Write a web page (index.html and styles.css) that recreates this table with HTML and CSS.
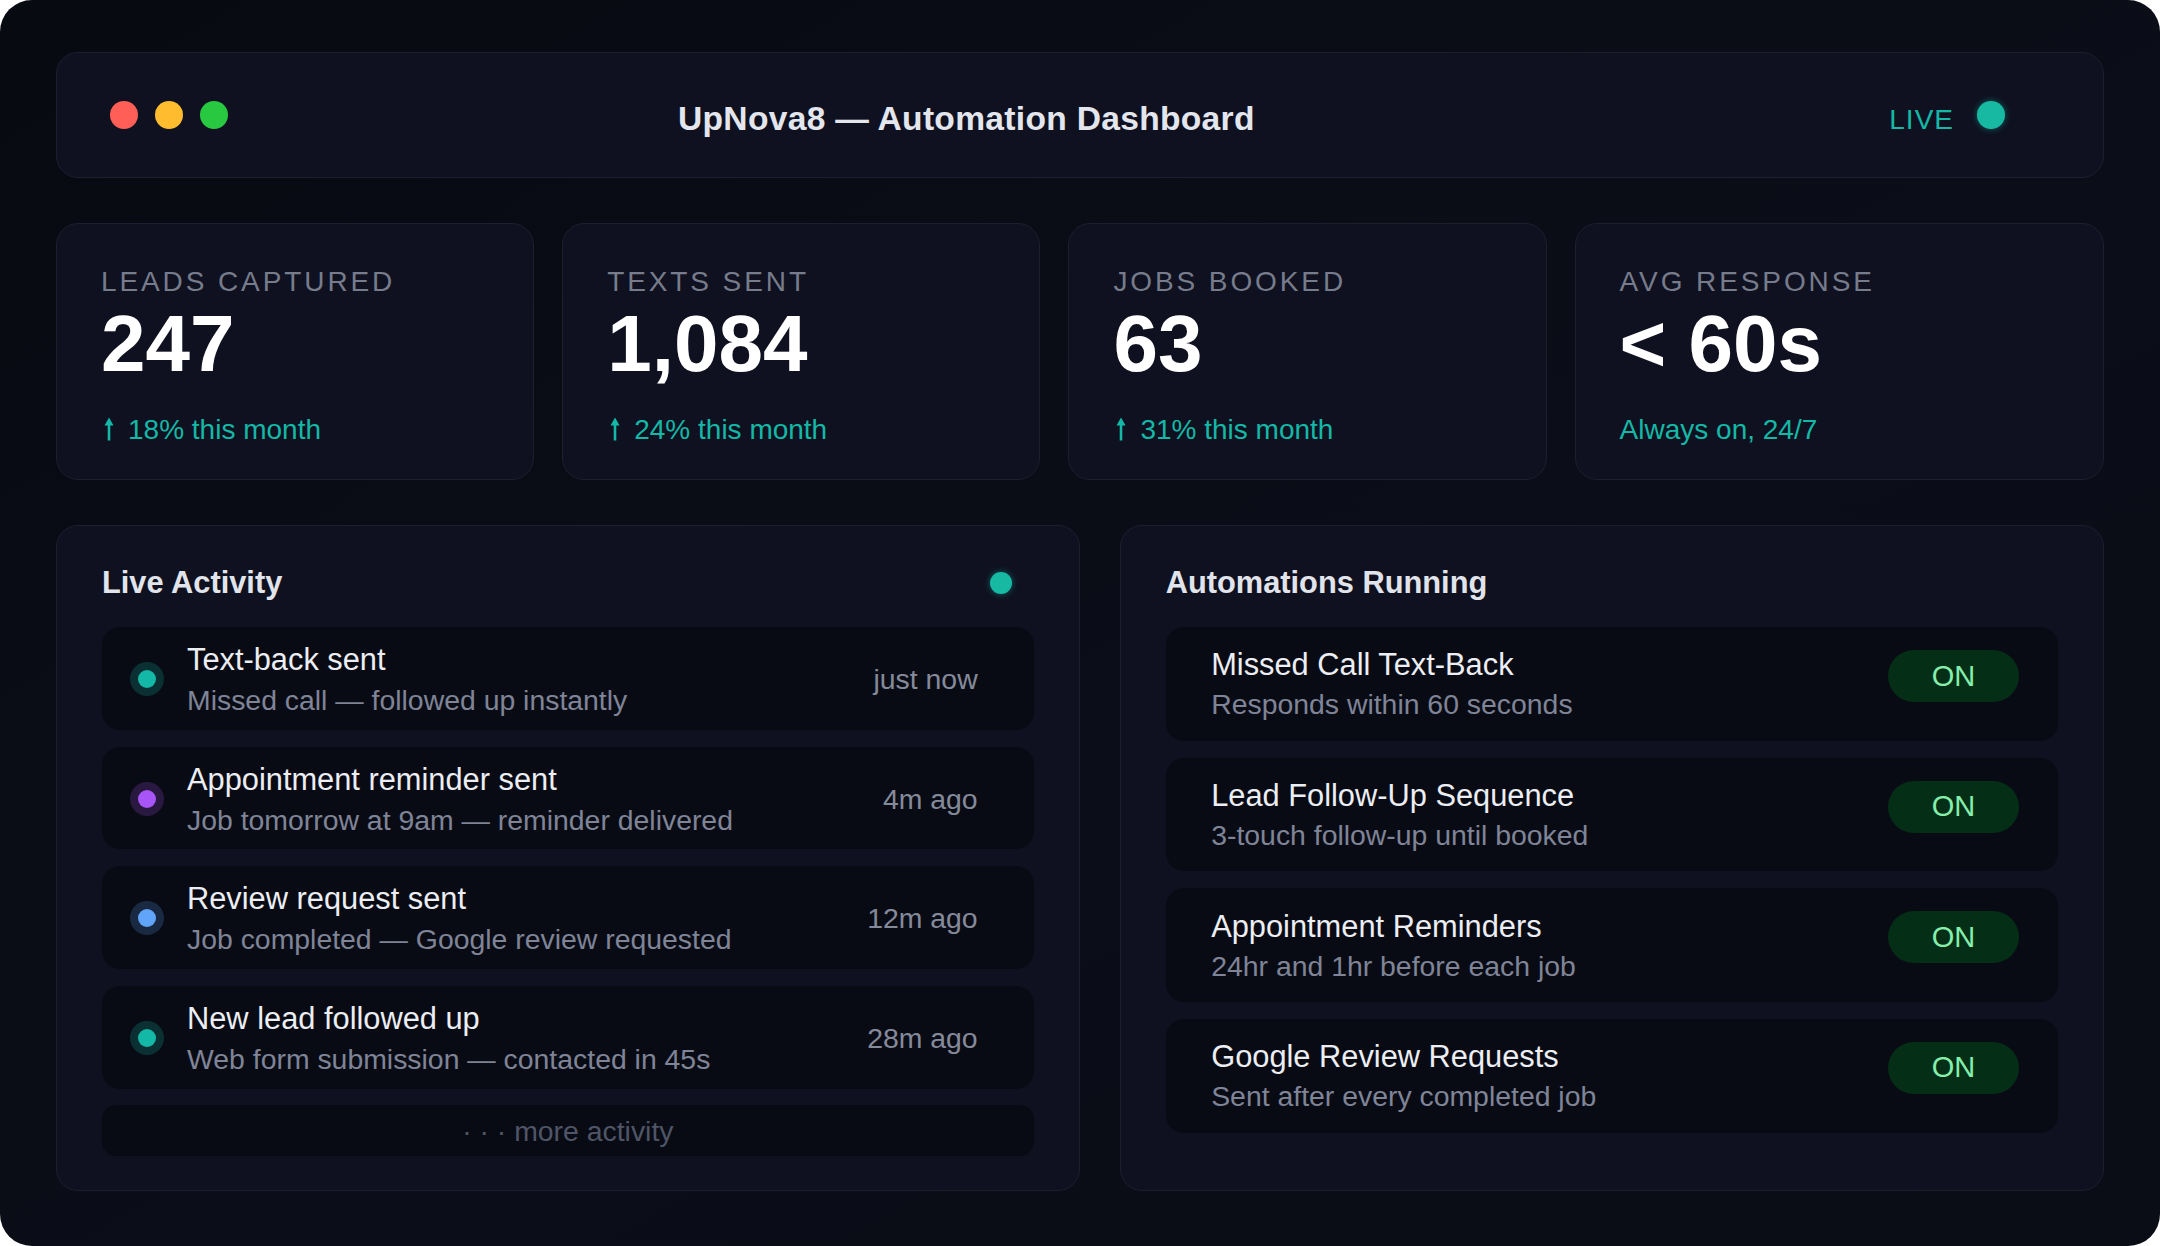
FILE: index.html
```html
<!DOCTYPE html>
<html lang="en">
<head>
<meta charset="utf-8">
<title>UpNova8 — Automation Dashboard</title>
<link rel="stylesheet" href="styles.css">
</head>
<body>
<div class="frame">
  <header class="header">
    <div class="lights">
      <span class="light red"></span>
      <span class="light yellow"></span>
      <span class="light green"></span>
    </div>
    <h1 class="title">UpNova8 — Automation Dashboard</h1>
    <div class="live">
      <span class="live-text">LIVE</span>
      <span class="live-dot"></span>
    </div>
  </header>

  <section class="stats">
    <div class="stat">
      <div class="stat-label">LEADS CAPTURED</div>
      <div class="stat-value">247</div>
      <div class="stat-sub"><svg class="arrow" viewBox="0 0 14 24" aria-hidden="true"><path d="M7 23.5V5" /><path class="head" d="M2.5 8.5L7 0.5l4.5 8z" /></svg>18% this month</div>
    </div>
    <div class="stat">
      <div class="stat-label">TEXTS SENT</div>
      <div class="stat-value">1,084</div>
      <div class="stat-sub"><svg class="arrow" viewBox="0 0 14 24" aria-hidden="true"><path d="M7 23.5V5" /><path class="head" d="M2.5 8.5L7 0.5l4.5 8z" /></svg>24% this month</div>
    </div>
    <div class="stat">
      <div class="stat-label">JOBS BOOKED</div>
      <div class="stat-value">63</div>
      <div class="stat-sub"><svg class="arrow" viewBox="0 0 14 24" aria-hidden="true"><path d="M7 23.5V5" /><path class="head" d="M2.5 8.5L7 0.5l4.5 8z" /></svg>31% this month</div>
    </div>
    <div class="stat">
      <div class="stat-label">AVG RESPONSE</div>
      <div class="stat-value">&lt; 60s</div>
      <div class="stat-sub">Always on, 24/7</div>
    </div>
  </section>

  <section class="panels">
    <div class="panel">
      <div class="panel-head">
        <h2 class="panel-title">Live Activity</h2>
        <span class="head-dot"></span>
      </div>
      <div class="list">
        <div class="act">
          <span class="dot teal"></span>
          <div class="act-text">
            <div class="row-title">Text-back sent</div>
            <div class="row-sub">Missed call — followed up instantly</div>
          </div>
          <span class="time">just now</span>
        </div>
        <div class="act">
          <span class="dot purple"></span>
          <div class="act-text">
            <div class="row-title">Appointment reminder sent</div>
            <div class="row-sub">Job tomorrow at 9am — reminder delivered</div>
          </div>
          <span class="time">4m ago</span>
        </div>
        <div class="act">
          <span class="dot blue"></span>
          <div class="act-text">
            <div class="row-title">Review request sent</div>
            <div class="row-sub">Job completed — Google review requested</div>
          </div>
          <span class="time">12m ago</span>
        </div>
        <div class="act">
          <span class="dot teal"></span>
          <div class="act-text">
            <div class="row-title">New lead followed up</div>
            <div class="row-sub">Web form submission — contacted in 45s</div>
          </div>
          <span class="time">28m ago</span>
        </div>
        <div class="more">· · · more activity</div>
      </div>
    </div>

    <div class="panel">
      <div class="panel-head">
        <h2 class="panel-title">Automations Running</h2>
      </div>
      <div class="list">
        <div class="auto">
          <div class="auto-text">
            <div class="row-title">Missed Call Text-Back</div>
            <div class="row-sub">Responds within 60 seconds</div>
          </div>
          <span class="pill">ON</span>
        </div>
        <div class="auto">
          <div class="auto-text">
            <div class="row-title">Lead Follow-Up Sequence</div>
            <div class="row-sub">3-touch follow-up until booked</div>
          </div>
          <span class="pill">ON</span>
        </div>
        <div class="auto">
          <div class="auto-text">
            <div class="row-title">Appointment Reminders</div>
            <div class="row-sub">24hr and 1hr before each job</div>
          </div>
          <span class="pill">ON</span>
        </div>
        <div class="auto">
          <div class="auto-text">
            <div class="row-title">Google Review Requests</div>
            <div class="row-sub">Sent after every completed job</div>
          </div>
          <span class="pill">ON</span>
        </div>
      </div>
    </div>
  </section>
</div>
</body>
</html>
```

FILE: styles.css
```css
* { box-sizing: border-box; }

html, body {
  margin: 0;
  padding: 0;
  background: #ffffff;
}

body {
  font-family: "Liberation Sans", Arial, "Helvetica Neue", sans-serif;
  width: 2160px;
  height: 1246px;
  overflow: hidden;
}

.frame {
  width: 2160px;
  height: 1246px;
  border-radius: 32px;
  background: linear-gradient(150deg, #080a12 0%, #0b0d18 55%, #0a0c16 100%);
  padding: 52px 56px 55px;
  display: flex;
  flex-direction: column;
  gap: 45px;
}

/* Header */
.header {
  height: 126px;
  flex: none;
  display: flex;
  align-items: center;
  padding: 0 98px 0 53px;
  background: #0f1120;
  border: 1px solid #1c1f2e;
  border-radius: 22px;
}

.lights {
  display: flex;
  gap: 17px;
}

.light {
  width: 28px;
  height: 28px;
  border-radius: 50%;
}
.red { background: #ff5f57; }
.yellow { background: #febc2e; }
.green { background: #28c840; }

.title {
  margin: 8px 0 0 450px;
  font-size: 33.6px;
  font-weight: 700;
  letter-spacing: 0.3px;
  color: #e4e6ee;
  line-height: 1.2;
}

.live {
  margin-left: auto;
  display: flex;
  align-items: center;
  gap: 23px;
}

.live-text {
  font-size: 28px;
  letter-spacing: 1px;
  color: #14b8a6;
  line-height: 34px;
  margin-top: 10px;
}

.live-dot {
  width: 28px;
  height: 28px;
  border-radius: 50%;
  background: #17b9a3;
  box-shadow: 0 0 6px rgba(20, 184, 166, 0.5);
}

/* Stats */
.stats {
  display: grid;
  grid-template-columns: 1fr 1fr 1fr 1.107fr;
  gap: 28px;
  flex: none;
}

.stat {
  background: #0f1120;
  border: 1px solid #1c1f2e;
  border-radius: 22px;
  padding: 41px 43px 32px 44px;
}

.stat-label {
  font-size: 28px;
  line-height: 34px;
  letter-spacing: 2.9px;
  color: #777c8c;
}

.stat-value {
  margin-top: 5px;
  font-size: 80px;
  line-height: 80px;
  font-weight: 700;
  color: #ffffff;
}

.stat-sub {
  margin-top: 29px;
  font-size: 28px;
  line-height: 34px;
  color: #14b8a6;
  display: flex;
  align-items: center;
}

.arrow {
  width: 14px;
  height: 24px;
  margin: 0 12px 2px 1px;
  flex: none;
}
.arrow path {
  stroke: #14b8a6;
  stroke-width: 2.6;
  fill: none;
}
.arrow path.head {
  fill: #14b8a6;
  stroke: none;
}

/* Panels */
.panels {
  display: grid;
  grid-template-columns: 1.04fr 1fr;
  gap: 40px;
  flex: none;
}

.panel {
  background: #0f1120;
  border: 1px solid #1c1f2e;
  border-radius: 22px;
  padding: 38px 45px 34px;
}

.panel-head {
  display: flex;
  align-items: center;
  justify-content: space-between;
  height: 37px;
  margin-bottom: 26px;
}

.panel-title {
  margin: 0;
  font-size: 30.8px;
  line-height: 37px;
  font-weight: 700;
  color: #e2e4eb;
}

.head-dot {
  width: 22px;
  height: 22px;
  border-radius: 50%;
  background: #17b9a3;
  box-shadow: 0 0 6px rgba(20, 184, 166, 0.5);
  margin-right: 22px;
}

.list {
  display: flex;
  flex-direction: column;
  gap: 16.8px;
}

.row-title {
  font-size: 30.8px;
  line-height: 37px;
  color: #eceef3;
}

.row-sub {
  font-size: 28.4px;
  line-height: 34px;
  color: #7f8497;
}

/* Activity rows */
.act {
  display: flex;
  align-items: center;
  background: #090b14;
  border-radius: 18px;
  padding: 14px 56px 12.8px 36px;
}

.dot {
  flex: none;
  width: 18px;
  height: 18px;
  border-radius: 50%;
  margin-right: 31px;
}
.dot.teal { background: #14b8a6; box-shadow: 0 0 0 8px rgba(20, 184, 166, 0.22); }
.dot.purple { background: #a855f7; box-shadow: 0 0 0 8px rgba(168, 85, 247, 0.2); }
.dot.blue { background: #60a5fa; box-shadow: 0 0 0 8px rgba(96, 165, 250, 0.2); }

.act-text {
  flex: 1;
  display: flex;
  flex-direction: column;
  gap: 5px;
}

.time {
  font-size: 28.4px;
  line-height: 34px;
  color: #858a9b;
}

.more {
  background: #090b14;
  border-radius: 14px;
  padding: 8.5px 0;
  text-align: center;
  font-size: 28.4px;
  line-height: 34px;
  color: #4f5566;
}

/* Automation rows */
.auto {
  display: flex;
  align-items: flex-start;
  justify-content: space-between;
  background: #090b14;
  border-radius: 18px;
  padding: 19.4px 39px 19.4px 45.5px;
}

.auto-text {
  display: flex;
  flex-direction: column;
  gap: 4px;
}

.pill {
  margin-top: 3.6px;
  background: #052e16;
  color: #86efac;
  font-size: 29px;
  line-height: 34.8px;
  padding: 8.6px 43.7px;
  border-radius: 999px;
}
```
